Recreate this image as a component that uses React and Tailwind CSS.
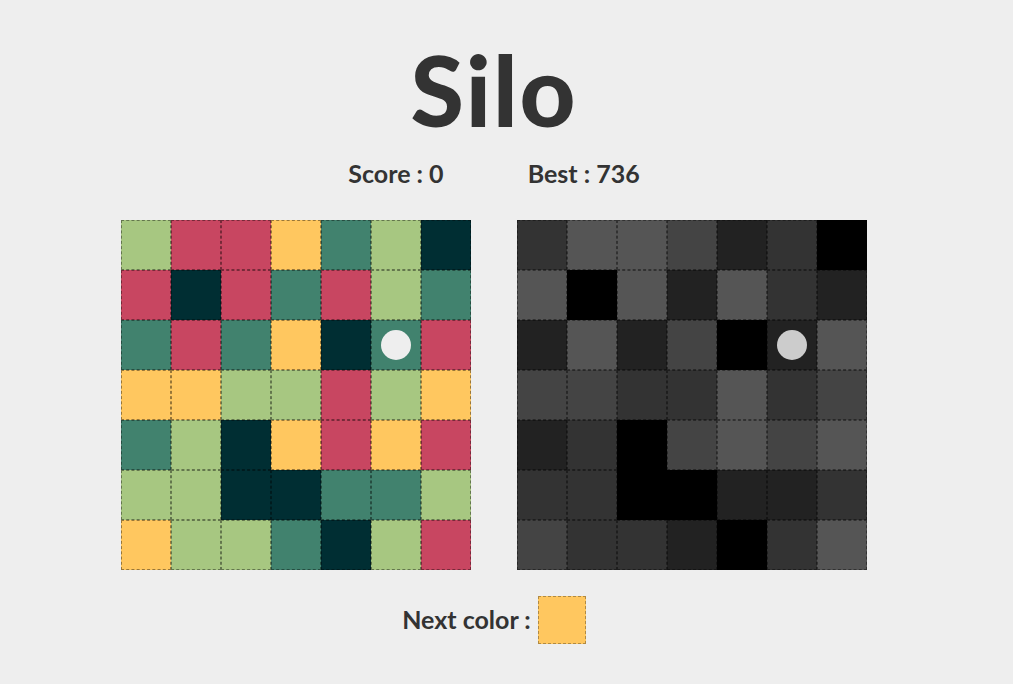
const left = [
  "GRRYTGD",
  "RDRTRGT",
  "TRTYDTR",
  "YYGGRGY",
  "TGDYRYR",
  "GGDDTTG",
  "YGGTDGR",
];

const right = [
  "3554230",
  "5052532",
  "2524025",
  "4433534",
  "2304545",
  "3300223",
  "4332035",
];

const colors = {
  G: "bg-[#a7c781]",
  R: "bg-[#c84661]",
  Y: "bg-[#ffc75f]",
  T: "bg-[#41826e]",
  D: "bg-[#002e33]",
  0: "bg-[#000000]",
  2: "bg-[#222222]",
  3: "bg-[#333333]",
  4: "bg-[#444444]",
  5: "bg-[#555555]",
};

const Board = ({ rows, dot }) => (
  <div className="grid grid-cols-7 w-[350px]">
    {rows.flatMap((row, r) =>
      row.split("").map((c, i) => (
        <div
          key={r + "-" + i}
          className={`h-[50px] w-[50px] border border-dashed border-black/40 flex items-center justify-center ${colors[c]}`}
        >
          {r === 2 && i === 5 && <div className={`h-[30px] w-[30px] rounded-full ${dot}`} />}
        </div>
      ))
    )}
  </div>
);

export default function App() {
  return (
    <div className="min-h-screen bg-[#eeeeee] text-[#333333] font-['Lato','Liberation_Sans',sans-serif]">
      <div className="w-[988px] flex flex-col items-center">
        <h1 className="text-[97px] font-black leading-none mt-[41px] tracking-[2px]">Silo</h1>
        <div className="flex gap-[84px] mt-[17px] text-[25px] font-bold">
          <span>Score : 0</span>
          <span>Best : 736</span>
        </div>
        <div className="flex gap-[46px] mt-[27px]">
          <Board rows={left} dot="bg-[#eeeeee]" />
          <Board rows={right} dot="bg-[#cccccc]" />
        </div>
        <div className="flex items-center gap-[7px] mt-[26px] text-[25px] font-bold">
          <span>Next color :</span>
          <div className="h-[48px] w-[48px] border border-dashed border-black/30 bg-[#ffc75f]" />
        </div>
      </div>
    </div>
  );
}
